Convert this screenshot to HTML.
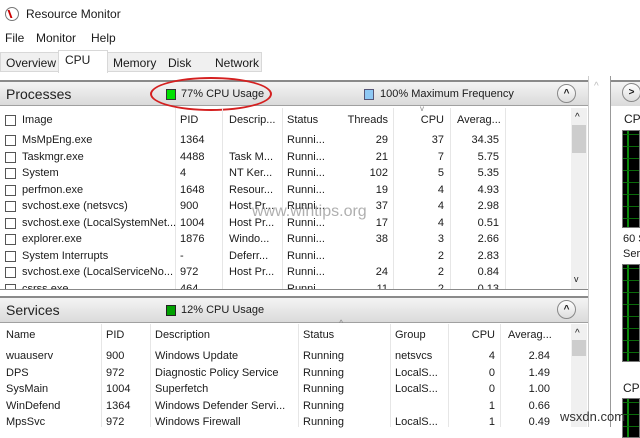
<!DOCTYPE html>
<html><head><style>
*{margin:0;padding:0;box-sizing:border-box}
body{width:640px;height:427px;overflow:hidden;background:#fff;font-family:"Liberation Sans",sans-serif;font-size:11px;color:#1a1a1a;position:relative}
.a{position:absolute;white-space:nowrap}
.hdr{position:absolute;left:0;width:588px;height:26px;background:linear-gradient(#f4f4f4,#dadada);border-top:2px solid #8a8a8a;border-bottom:1px solid #a0a0a0}
.hdr .t{position:absolute;left:6px;top:4px;font-size:14px;color:#222}
.btn{position:absolute;width:19px;height:19px;border-radius:50%;border:1px solid #888;background:linear-gradient(#fff,#ddd);font-size:10px;text-align:center;line-height:17px;font-weight:bold}
.cb{position:absolute;width:11px;height:11px;border:1px solid #555;background:#fff}
.r{text-align:right}
.sep{position:absolute;width:1px;background:#e6e6e6}
.graph{position:absolute;left:622px;width:18px;background:#000;border:1px solid #777;
background-image:linear-gradient(#0a6b0a 1px,transparent 1px),linear-gradient(90deg,#0a8a0a 2px,transparent 2px);background-size:18px 12px,18px 100%;background-position:0 3px,4px 0}
</style></head><body>
<div class="a" style="left:5px;top:7px;width:14px;height:14px;border-radius:50%;border:1px solid #777;background:#fff"></div>
<div class="a" style="left:9px;top:10px;width:6px;height:8px;border-left:2px solid #c00;transform:skewX(20deg)"></div>
<div class="a" style="left:26px;top:7px;font-size:12px">Resource Monitor</div>
<div class="a" style="left:5px;top:31px;font-size:12px">File</div>
<div class="a" style="left:36px;top:31px;font-size:12px">Monitor</div>
<div class="a" style="left:91px;top:31px;font-size:12px">Help</div>
<div class="a" style="left:0;top:52px;width:262px;height:20px;background:#f0f0f0;border:1px solid #d8d8d8"></div>
<div class="a" style="left:58px;top:50px;width:50px;height:23px;background:#fff;border:1px solid #d8d8d8;border-bottom:none"></div>
<div class="a" style="left:6px;top:56px;font-size:12px">Overview</div>
<div class="a" style="left:65px;top:53px;font-size:12px">CPU</div>
<div class="a" style="left:113px;top:56px;font-size:12px">Memory</div>
<div class="a" style="left:168px;top:56px;font-size:12px">Disk</div>
<div class="a" style="left:215px;top:56px;font-size:12px">Network</div>
<div class="hdr" style="top:80px"><div class="t">Processes</div>
<div class="a" style="left:166px;top:7px;width:10px;height:11px;background:#00e000;border:1px solid #333"></div>
<div class="a" style="left:181px;top:6px;font-size:11px">77% CPU Usage</div>
<div class="a" style="left:364px;top:7px;width:10px;height:11px;background:#8ec8f4;border:1px solid #557"></div>
<div class="a" style="left:380px;top:6px;font-size:11px">100% Maximum Frequency</div>
<div class="btn" style="left:557px;top:2px">^</div></div>
<div class="a" style="left:150px;top:77px;width:122px;height:34px;border:2px solid #d42020;border-radius:50%"></div>
<div class="sep" style="left:175px;top:108px;height:182px"></div>
<div class="sep" style="left:222px;top:108px;height:182px"></div>
<div class="sep" style="left:282px;top:108px;height:182px"></div>
<div class="sep" style="left:393px;top:108px;height:182px"></div>
<div class="sep" style="left:450px;top:108px;height:182px"></div>
<div class="sep" style="left:505px;top:108px;height:182px"></div>
<div class="a" style="left:571px;top:108px;width:16px;height:182px;background:#f0f0f0"></div>
<div class="a" style="left:572px;top:125px;width:14px;height:28px;background:#cdcdcd"></div>
<div class="a" style="left:575px;top:112px;font-size:10px">^</div>
<div class="a" style="left:574px;top:274px;font-size:9px">v</div>
<div id="proc"></div>
<div class="a" style="left:0;top:289px;width:588px;height:7px;background:#fff"></div>
<div class="a" style="left:0;top:289px;width:588px;height:1px;background:#888"></div>
<div class="hdr" style="top:296px;height:27px"><div class="t">Services</div>
<div class="a" style="left:166px;top:7px;width:10px;height:11px;background:#00a000;border:1px solid #222"></div>
<div class="a" style="left:181px;top:6px;font-size:11px">12% CPU Usage</div>
<div class="btn" style="left:557px;top:2px">^</div></div>
<div class="sep" style="left:101px;top:324px;height:103px"></div>
<div class="sep" style="left:150px;top:324px;height:103px"></div>
<div class="sep" style="left:298px;top:324px;height:103px"></div>
<div class="sep" style="left:390px;top:324px;height:103px"></div>
<div class="sep" style="left:448px;top:324px;height:103px"></div>
<div class="sep" style="left:500px;top:324px;height:103px"></div>
<div class="a" style="left:571px;top:324px;width:16px;height:103px;background:#f0f0f0"></div>
<div class="a" style="left:572px;top:340px;width:14px;height:16px;background:#cdcdcd"></div>
<div class="a" style="left:575px;top:328px;font-size:10px">^</div>
<div class="a" style="left:339px;top:318px;font-size:9px;color:#888">^</div>
<div class="a" style="left:420px;top:104px;font-size:8px;color:#888">v</div>
<div id="svc"></div>
<div class="a" style="left:588px;top:76px;width:1px;height:351px;background:#ccc"></div>
<div class="a" style="left:594px;top:81px;font-size:10px;color:#bbb">^</div>
<div class="a" style="left:610px;top:76px;width:1px;height:351px;background:#999"></div>
<div class="a" style="left:611px;top:80px;width:29px;height:26px;background:linear-gradient(#f4f4f4,#dadada);border-top:2px solid #8a8a8a"></div>
<div class="btn" style="left:622px;top:83px">&gt;</div>
<div class="a" style="left:624px;top:112px;font-size:12px">CPU</div>
<div class="graph" style="top:130px;height:98px"></div>
<div class="a" style="left:623px;top:233px;font-size:11px">60 S</div>
<div class="a" style="left:623px;top:248px;font-size:11px">Serv</div>
<div class="graph" style="top:264px;height:98px"></div>
<div class="a" style="left:623px;top:381px;font-size:12px">CPU</div>
<div class="graph" style="top:398px;height:40px"></div>
<div class="a" style="left:252px;top:203px;font-size:16px;color:rgba(110,110,110,.55)">www.wintips.org</div>
<div class="a" style="left:560px;top:409px;font-size:13px;color:#333">wsxdn.com</div>
<script>
var P=[["Image","PID","Descrip...","Status","Threads","CPU","Averag..."],
["MsMpEng.exe","1364","","Runni...","29","37","34.35"],
["Taskmgr.exe","4488","Task M...","Runni...","21","7","5.75"],
["System","4","NT Ker...","Runni...","102","5","5.35"],
["perfmon.exe","1648","Resour...","Runni...","19","4","4.93"],
["svchost.exe (netsvcs)","900","Host Pr...","Runni...","37","4","2.98"],
["svchost.exe (LocalSystemNet...","1004","Host Pr...","Runni...","17","4","0.51"],
["explorer.exe","1876","Windo...","Runni...","38","3","2.66"],
["System Interrupts","-","Deferr...","Runni...","","2","2.83"],
["svchost.exe (LocalServiceNo...","972","Host Pr...","Runni...","24","2","0.84"],
["csrss.exe","464","","Runni...","11","2","0.13"]];
var h="";
P.forEach(function(r,i){var y=i==0?114:134+(i-1)*16.5;
h+='<div class="cb" style="left:5px;top:'+(y+1)+'px;"></div>';
var s='top:'+y+'px;';
h+='<div class="a" style="left:22px;'+s+'">'+r[0]+'</div><div class="a" style="left:180px;'+s+'">'+r[1]+'</div><div class="a" style="left:229px;'+s+'">'+r[2]+'</div><div class="a" style="left:287px;'+s+'">'+r[3]+'</div><div class="a r" style="right:252px;'+s+'">'+r[4]+'</div><div class="a r" style="right:196px;'+s+'">'+r[5]+'</div><div class="a" style="left:457px;'+s+'">'+(i==0?r[6]:'')+'</div><div class="a r" style="right:141px;'+s+'">'+(i?r[6]:'')+'</div>';});
document.getElementById('proc').innerHTML=h;
var S=[["Name","PID","Description","Status","Group","CPU","Averag..."],
["wuauserv","900","Windows Update","Running","netsvcs","4","2.84"],
["DPS","972","Diagnostic Policy Service","Running","LocalS...","0","1.49"],
["SysMain","1004","Superfetch","Running","LocalS...","0","1.00"],
["WinDefend","1364","Windows Defender Servi...","Running","","1","0.66"],
["MpsSvc","972","Windows Firewall","Running","LocalS...","1","0.49"]];
h="";
S.forEach(function(r,i){var y=i==0?329:350+(i-1)*16.5;var s='top:'+y+'px;';
h+='<div class="a" style="left:6px;'+s+'">'+r[0]+'</div><div class="a" style="left:106px;'+s+'">'+r[1]+'</div><div class="a" style="left:155px;'+s+'">'+r[2]+'</div><div class="a" style="left:303px;'+s+'">'+r[3]+'</div><div class="a" style="left:395px;'+s+'">'+r[4]+'</div><div class="a r" style="right:145px;'+s+'">'+r[5]+'</div>'+(i==0?'<div class="a" style="left:508px;'+s+'">'+r[6]+'</div>':'<div class="a r" style="right:90px;'+s+'">'+r[6]+'</div>');});
document.getElementById('svc').innerHTML=h;
</script>
</body></html>
